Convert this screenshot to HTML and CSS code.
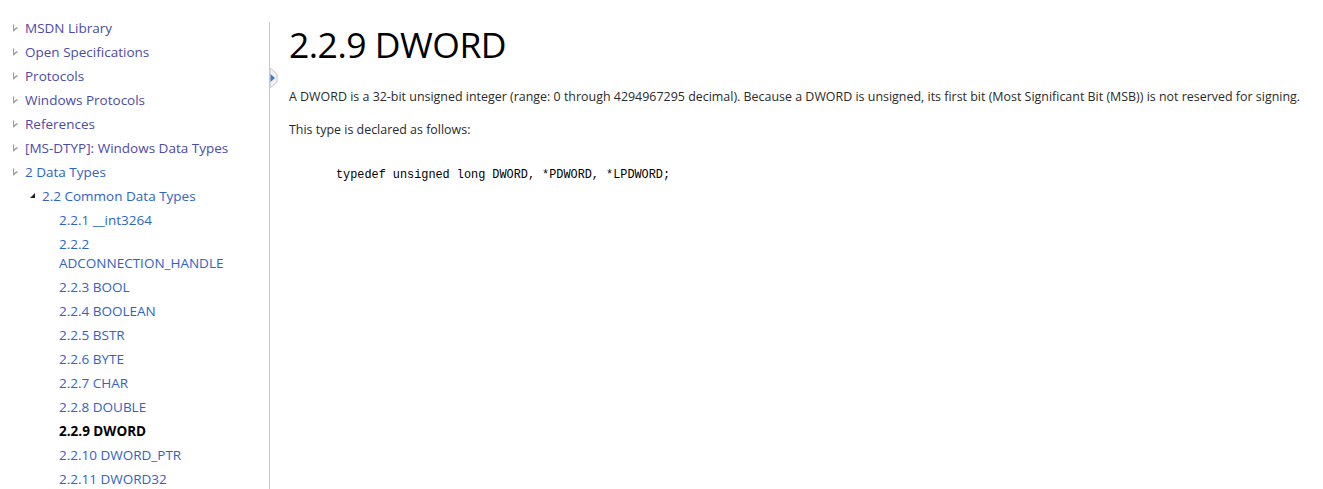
FILE: index.html
```html
<!DOCTYPE html>
<html>
<head>
<meta charset="utf-8">
<link rel="stylesheet" href="styles.css">
</head>
<body>
<div class="page">
  <nav class="sidebar">
    <ul class="toc">
      <li class="l1"><span class="tri-closed"></span><a class="visited" href="#">MSDN Library</a></li>
      <li class="l1"><span class="tri-closed"></span><a class="visited" href="#">Open Specifications</a></li>
      <li class="l1"><span class="tri-closed"></span><a class="visited" href="#">Protocols</a></li>
      <li class="l1"><span class="tri-closed"></span><a class="visited" href="#">Windows Protocols</a></li>
      <li class="l1"><span class="tri-closed"></span><a class="visited" href="#">References</a></li>
      <li class="l1"><span class="tri-closed"></span><a class="visited" href="#">[MS-DTYP]: Windows Data Types</a></li>
      <li class="l1"><span class="tri-closed"></span><a href="#">2 Data Types</a></li>
      <li class="l2"><span class="tri-open"></span><a href="#">2.2 Common Data Types</a></li>
      <li class="l3"><a href="#">2.2.1 __int3264</a></li>
      <li class="l3"><a href="#">2.2.2 ADCONNECTION_HANDLE</a></li>
      <li class="l3"><a href="#">2.2.3 BOOL</a></li>
      <li class="l3"><a href="#">2.2.4 BOOLEAN</a></li>
      <li class="l3"><a href="#">2.2.5 BSTR</a></li>
      <li class="l3"><a href="#">2.2.6 BYTE</a></li>
      <li class="l3"><a href="#">2.2.7 CHAR</a></li>
      <li class="l3"><a href="#">2.2.8 DOUBLE</a></li>
      <li class="l3 current"><span>2.2.9 DWORD</span></li>
      <li class="l3"><a href="#">2.2.10 DWORD_PTR</a></li>
      <li class="l3"><a href="#">2.2.11 DWORD32</a></li>
    </ul>
  </nav>
  <main class="content">
    <div class="toggle">
      <svg width="8" height="20" viewBox="0 0 8 20">
        <path d="M0 0 L7 6 L7 14 L0 20 Z" fill="#f2f2f2" stroke="#c8c8c8" stroke-width="1"/>
        <path d="M0.5 6 L5 10 L0.5 14 Z" fill="#3a7bd5"/>
      </svg>
    </div>
    <h1 class="title">2.2.9 DWORD</h1>
    <p class="text">A DWORD is a 32-bit unsigned integer (range: 0 through 4294967295 decimal). Because a DWORD is unsigned, its first bit (Most Significant Bit (MSB)) is not reserved for signing.</p>
    <p class="text">This type is declared as follows:</p>
    <pre class="code">typedef unsigned long DWORD, *PDWORD, *LPDWORD;</pre>
  </main>
</div>
</body>
</html>
```

FILE: styles.css
```css
html, body {
  margin: 0;
  padding: 0;
  background: #fff;
}
body {
  font-family: "Open Sans", "Noto Sans", sans-serif;
  color: #222;
  overflow: hidden;
}
.page {
  display: flex;
  align-items: flex-start;
}
.sidebar {
  width: 269px;
  flex: none;
  padding-top: 16px;
}
.toc {
  list-style: none;
  margin: 0;
  padding: 0;
}
.toc li {
  display: flex;
  align-items: flex-start;
  font-size: 13.5px;
  line-height: 19px;
  padding: 2.5px 0;
}
.toc a {
  color: #2f63c9;
  text-decoration: none;
}
.toc a.visited {
  color: #4d4aa8;
}
.toc li.l1 {
  padding-left: 13px;
}
.toc li.l2 {
  padding-left: 30px;
}
.toc li.l3 {
  padding-left: 59px;
  padding-right: 30px;
}
.toc li.current span {
  font-weight: 700;
  color: #000;
}
.tri-closed {
  flex: none;
  width: 0;
  height: 0;
  margin-top: 5px;
  margin-right: 7px;
  border-top: 4px solid transparent;
  border-bottom: 4px solid transparent;
  border-left: 5px solid #a0a0a0;
  position: relative;
}
.tri-closed::after {
  content: "";
  position: absolute;
  left: -4px;
  top: -2.6px;
  border-top: 2.6px solid transparent;
  border-bottom: 2.6px solid transparent;
  border-left: 3px solid #fff;
}
.tri-open {
  flex: none;
  width: 0;
  height: 0;
  margin-top: 6px;
  margin-right: 7px;
  border-left: 5px solid transparent;
  border-bottom: 5px solid #222;
}
.content {
  flex: 1;
  position: relative;
  margin-top: 22px;
  border-left: 1px solid #c8c8c8;
  min-height: 480px;
  padding-left: 19px;
}
.toggle {
  position: absolute;
  left: 0;
  top: 46px;
  width: 8px;
  height: 20px;
}
.toggle svg {
  display: block;
}
.title {
  margin: 0;
  font-size: 35.5px;
  font-weight: 400;
  line-height: 44px;
  color: #000;
  letter-spacing: -0.5px;
}
.text {
  font-size: 12.45px;
  line-height: 17px;
  margin: 22px 0 0;
  color: #2a2a2a;
}
.text + .text {
  margin-top: 16px;
}
.code {
  font-family: "Liberation Mono", "DejaVu Sans Mono", monospace;
  font-size: 11.85px;
  line-height: 16px;
  margin: 29px 0 0 47px;
  color: #000;
}
```
